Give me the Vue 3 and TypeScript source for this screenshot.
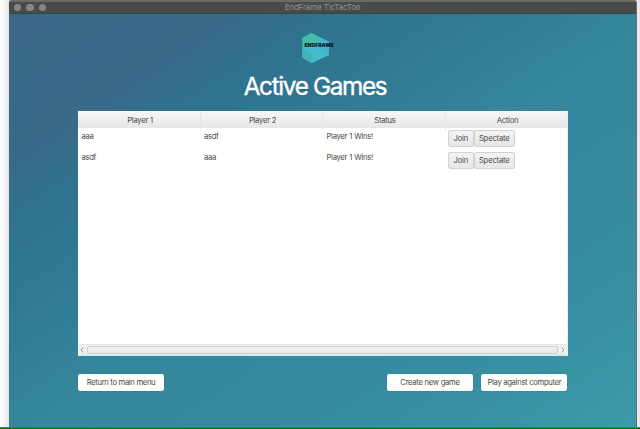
<script setup lang="ts">
interface Game {
  id: number
  player1: string
  player2: string
  status: string
}

const columns: string[] = ['Player 1', 'Player 2', 'Status', 'Action']

const games: Game[] = [
  { id: 1, player1: 'aaa', player2: 'asdf', status: 'Player 1 Wins!' },
  { id: 2, player1: 'asdf', player2: 'aaa', status: 'Player 1 Wins!' },
]
</script>

<template>
  <div class="desktop">
    <div class="window">
      <header class="titlebar">
        <div class="lights"><i></i><i></i><i></i></div>
        <span class="title">EndFrame TicTacToe</span>
      </header>

      <main class="content">
        <svg class="logo" viewBox="0 0 34 32" width="34" height="32">
          <polygon points="9.500,1 18.500,5.500 27,10 27,23 9.500,31 0.500,25.500 0.500,6" fill="#43b6cf" />
          <polygon points="9.500,1 18.500,6 12,14 0.500,17 0.500,6" fill="#43bda6" />
          <polygon points="0.500,17 12,14 27,23 9.500,31 0.500,25.500" fill="#45bccb" />
          <polygon points="0.500,17 9.500,22 9.500,31 0.500,25.500" fill="#43b2b4" />
          <polygon points="18.500,5.500 27,10 27,23 12,14" fill="#49b3cf" />
          <text x="2.500" y="14.500" textLength="29" lengthAdjust="spacingAndGlyphs">ENDFRAME</text>
        </svg>
        <h1>Active Games</h1>

        <section class="table">
          <div class="row head">
            <div v-for="name in columns" :key="name" class="th">{{ name }}</div>
          </div>
          <div v-for="game in games" :key="game.id" class="row game">
            <div class="td">{{ game.player1 }}</div>
            <div class="td">{{ game.player2 }}</div>
            <div class="td">{{ game.status }}</div>
            <div class="actions">
              <button class="join">Join</button>
              <button class="spectate">Spectate</button>
            </div>
          </div>
          <div class="empty">
            <div v-for="n in 12" :key="n" class="row blank"><i v-for="c in 4" :key="c"></i></div>
          </div>
          <div class="scroll">
            <svg viewBox="0 0 8 8" width="8" height="8"><path d="M5.500 1.500 3 4 5.500 6.500" /></svg>
            <div class="thumb"></div>
            <svg viewBox="0 0 8 8" width="8" height="8"><path d="M2.500 1.500 5 4 2.500 6.500" /></svg>
          </div>
        </section>

        <footer>
          <button class="menu return">Return to main menu</button>
          <button class="menu create">Create new game</button>
          <button class="menu play">Play against computer</button>
        </footer>
      </main>
    </div>
    <div class="strip"></div>
  </div>
</template>

<style>
body {
  margin: 0;
  overflow: hidden;
}
</style>

<style scoped>
.desktop {
  box-sizing: border-box;
  width: 640px;
  height: 429px;
  display: flex;
  flex-direction: column;
  background: linear-gradient(90deg, #fdfdfd 0, #eff1f1 6px, #dfe3e4 9px, #dfe3e4 636px, #efefef 638px, #e6e6e6 640px);
  font-family: Inter, "Liberation Sans", sans-serif;
  color: #4a4a4a;
}
.window {
  box-sizing: border-box;
  width: 628px;
  height: 427px;
  flex: none;
  margin-left: 9px;
  border-right: 1px solid #686c6e;
  border-radius: 3px 3px 0 0;
  overflow: hidden;
  display: flex;
  flex-direction: column;
}
.titlebar {
  box-sizing: border-box;
  height: 14px;
  flex: none;
  display: grid;
  grid-template-columns: 1fr auto 1fr;
  align-items: center;
  background: #4a4a4a;
  border-top: 2px solid #6b6b6b;
  border-bottom: 1px solid #2c4650;
}
.lights {
  display: flex;
  gap: 5px;
  padding-left: 5px;
}
.lights i {
  width: 7.300px;
  height: 7.300px;
  border-radius: 50%;
  background: #858585;
}
.title {
  font-size: 8px;
  line-height: 11px;
  letter-spacing: -0.150px;
  color: #929292;
}
.content {
  flex: 1;
  display: flex;
  flex-direction: column;
  padding: 18px 69px 0;
  background: linear-gradient(147deg, #3b6787 0%, #386b89 19%, #2f738e 26%, #317c95 40%, #35869b 51%, #378a9f 72%, #3892a3 87%, #3b9ba8 100%);
}
.logo {
  display: block;
  margin-left: 223.500px;
}
.logo text {
  font-family: Inter, sans-serif;
  font-size: 5px;
  font-weight: 900;
  fill: #08151c;
}
h1 {
  margin: 6px 0 0;
  padding-right: 15px;
  height: 32px;
  font-size: 24.300px;
  line-height: 33px;
  font-weight: 400;
  letter-spacing: -1.340px;
  text-align: center;
  color: #fff;
  white-space: nowrap;
  -webkit-text-stroke: 0.400px #fff;
  text-shadow: 0 1px 1px #28627a;
}
.table {
  box-sizing: border-box;
  width: 490px;
  height: 245px;
  margin-top: 9px;
  display: flex;
  flex-direction: column;
  background: #fff;
  border-top: 1px solid #fff;
  border-right: 1px solid #d8f4f6;
  border-bottom: 2px solid #d2eef2;
}
.row {
  display: grid;
  grid-template-columns: 122.500px 122.500px 122.500px 1fr;
  flex: none;
}
.head {
  height: 16px;
  background: linear-gradient(#f6f6f6, #e6e6e6);
}
.th {
  box-sizing: border-box;
  padding-left: 2.500px;
  border-right: 1px solid #e6e6e6;
  text-align: center;
  font-size: 7.700px;
  line-height: 18px;
  letter-spacing: -0.270px;
}
.th:last-child {
  border-right: 0;
}
.game {
  height: 21.400px;
}
.td {
  padding-left: 3.500px;
  font-size: 7.700px;
  line-height: 17px;
  letter-spacing: -0.320px;
  word-spacing: 0.300px;
}
.actions {
  display: flex;
  align-items: flex-start;
  padding: 2.200px 0 0 2.500px;
}
button {
  box-sizing: border-box;
  margin: 0;
  padding: 0;
  font-family: inherit;
  font-size: 7.700px;
  letter-spacing: -0.350px;
  text-align: center;
  white-space: nowrap;
  color: #4a4a4a;
}
.actions button {
  height: 17px;
  line-height: 16px;
  border: 1px solid #d2d2d2;
  border-radius: 2px;
  background: linear-gradient(#f4f4f4, #e6e6e6);
  letter-spacing: -0.200px;
}
.join {
  width: 25.500px;
}
.spectate {
  width: 41.500px;
}
.empty {
  flex: 1;
  min-height: 0;
  overflow: hidden;
}
.blank {
  height: 15.200px;
}
.blank i {
  width: 1px;
  height: 1px;
  justify-self: end;
  background: #ededed;
}
.scroll {
  box-sizing: border-box;
  height: 10px;
  flex: none;
  display: flex;
  align-items: center;
  background: #f1f1f1;
  border-top: 1px solid #e6e6e6;
}
.scroll path {
  fill: none;
  stroke: #8e8e8e;
  stroke-width: 0.900;
}
.thumb {
  box-sizing: border-box;
  flex: 1;
  height: 8px;
  margin: 0 1px;
  border: 1px solid #d0d0d0;
  border-radius: 2px;
  background: linear-gradient(#f2f2f2, #e7e7e7);
}
footer {
  width: 489.400px;
  margin-top: 18px;
  display: flex;
  gap: 8.400px;
}
.menu {
  width: 86px;
  height: 17px;
  line-height: 17px;
  border: 0;
  border-radius: 2px;
  background: #fff;
  box-shadow: 0 0 1px #215f70;
}
.create {
  margin-left: auto;
  letter-spacing: -0.310px;
}
.play {
  letter-spacing: -0.320px;
}
.strip {
  box-sizing: border-box;
  height: 2px;
  flex: none;
  background: #056d09;
  border-top: 1px solid #08ad0c;
}
</style>
